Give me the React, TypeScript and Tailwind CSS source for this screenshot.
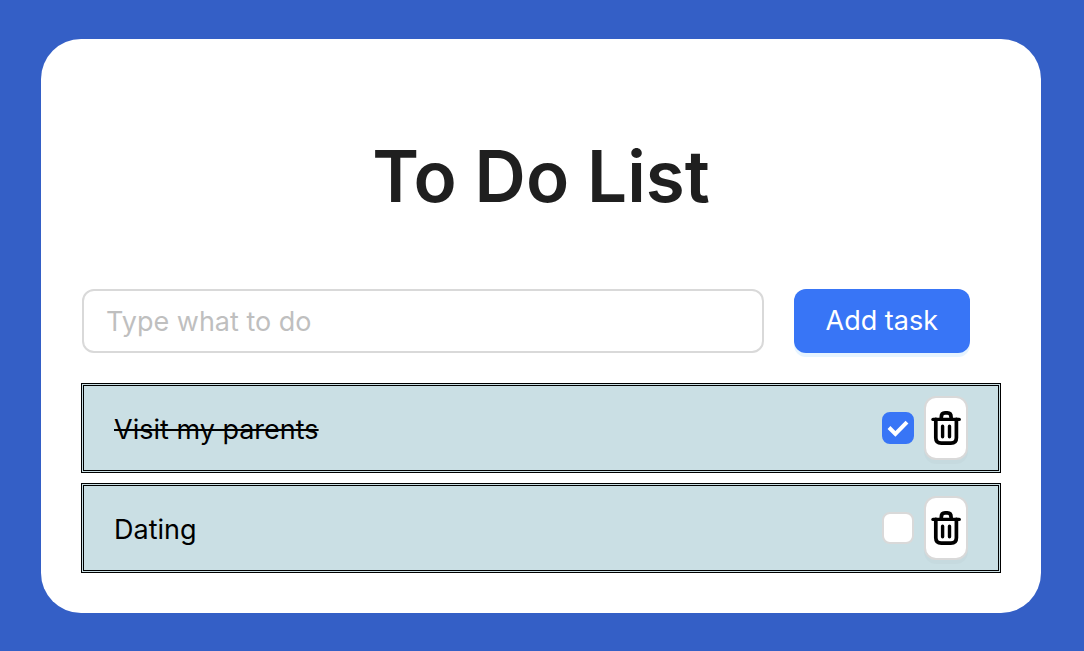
import { useState } from "react";

type Task = { id: number; title: string; done: boolean };

const initialTasks: Task[] = [
  { id: 1, title: "Visit my parents", done: true },
  { id: 2, title: "Dating", done: false },
];

function TrashIcon() {
  return (
    <svg
      viewBox="0 0 32 36"
      className="h-9 w-8 shrink-0"
      fill="none"
      stroke="black"
      strokeWidth="3.7"
      strokeLinecap="round"
      strokeLinejoin="round"
      aria-hidden="true"
    >
      <path d="M3 9.400H29.200" strokeWidth="3.4" />
      <path d="M11.300 8.500V7.200Q11.300 2.900 15 2.900H17.400Q21.100 2.900 21.100 7.200V8.500" />
      <path d="M5.800 9.400V27.800Q5.800 33.200 11.300 33.200H20.900Q26.400 33.200 26.400 27.800V9.400" />
      <path d="M12.600 16.200V26.800M19.500 16.200V26.800" strokeWidth="3.4" />
    </svg>
  );
}

function TaskRow({
  task,
  onToggle,
  onDelete,
}: {
  task: Task;
  onToggle: () => void;
  onDelete: () => void;
}) {
  const inputId = `task-${task.id}`;
  return (
    <li className="flex items-center justify-between border-[3px] border-double border-black bg-[#cadfe4] px-[30px] py-2.5">
      <label
        htmlFor={inputId}
        className={
          task.done ? "pt-1 text-[27px] leading-10 line-through" : "pt-1 text-[27px] leading-10"
        }
      >
        {task.title}
      </label>
      <div className="flex items-center gap-2.5">
        <span className="relative flex">
          <input
            id={inputId}
            type="checkbox"
            checked={task.done}
            onChange={onToggle}
            className="size-8 appearance-none rounded-lg border-2 border-[#d9d9d9] bg-white checked:border-[#3875f6] checked:bg-[#3875f6]"
          />
          {task.done && (
            <svg
              viewBox="0 0 32 32"
              className="pointer-events-none absolute inset-0 size-8"
              fill="none"
              stroke="white"
              strokeWidth="4"
              aria-hidden="true"
            >
              <path d="M7 15.500L13.400 22L25 10.200" />
            </svg>
          )}
        </span>
        <button
          type="button"
          aria-label={`Delete ${task.title}`}
          onClick={onDelete}
          className="flex h-16 w-11 items-center justify-center rounded-xl border-2 border-[#d9d9d9] bg-white shadow-[0_4px_0_rgba(0,0,0,0.02)]"
        >
          <TrashIcon />
        </button>
      </div>
    </li>
  );
}

export default function App() {
  const [tasks, setTasks] = useState<Task[]>(initialTasks);
  const [draft, setDraft] = useState("");

  const addTask = () => {
    const title = draft.trim();
    if (!title) return;
    setTasks([...tasks, { id: Date.now(), title, done: false }]);
    setDraft("");
  };

  return (
    <div className="min-h-screen bg-[#345fc6] py-[39px] pr-[43px] pl-[41px] font-['Inter',sans-serif] text-black">
      <main className="rounded-[40px] bg-white px-10 pt-[91px] pb-10">
        <h1 className="text-center text-[71px] leading-[92px] font-semibold text-[#1f1f1f]">
          To Do List
        </h1>
        <form
          className="mt-[67px] flex gap-[30px] pr-[31px] pl-px"
          onSubmit={(event) => {
            event.preventDefault();
            addTask();
          }}
        >
          <input
            type="text"
            aria-label="New task"
            placeholder="Type what to do"
            value={draft}
            onChange={(event) => setDraft(event.target.value)}
            className="h-16 min-w-0 flex-1 rounded-xl border-2 border-[#d9d9d9] px-[22px] text-[27px] outline-none placeholder:text-[#bfbfbf]"
          />
          <button
            type="submit"
            className="h-16 shrink-0 rounded-xl bg-[#3875f6] px-8 text-[27px] text-white shadow-[0_4px_0_rgba(5,145,255,0.1)]"
          >
            Add task
          </button>
        </form>
        <ul className="mt-[30px] flex flex-col gap-2.5">
          {tasks.map((task) => (
            <TaskRow
              key={task.id}
              task={task}
              onToggle={() =>
                setTasks(tasks.map((t) => (t.id === task.id ? { ...t, done: !t.done } : t)))
              }
              onDelete={() => setTasks(tasks.filter((t) => t.id !== task.id))}
            />
          ))}
        </ul>
      </main>
    </div>
  );
}
